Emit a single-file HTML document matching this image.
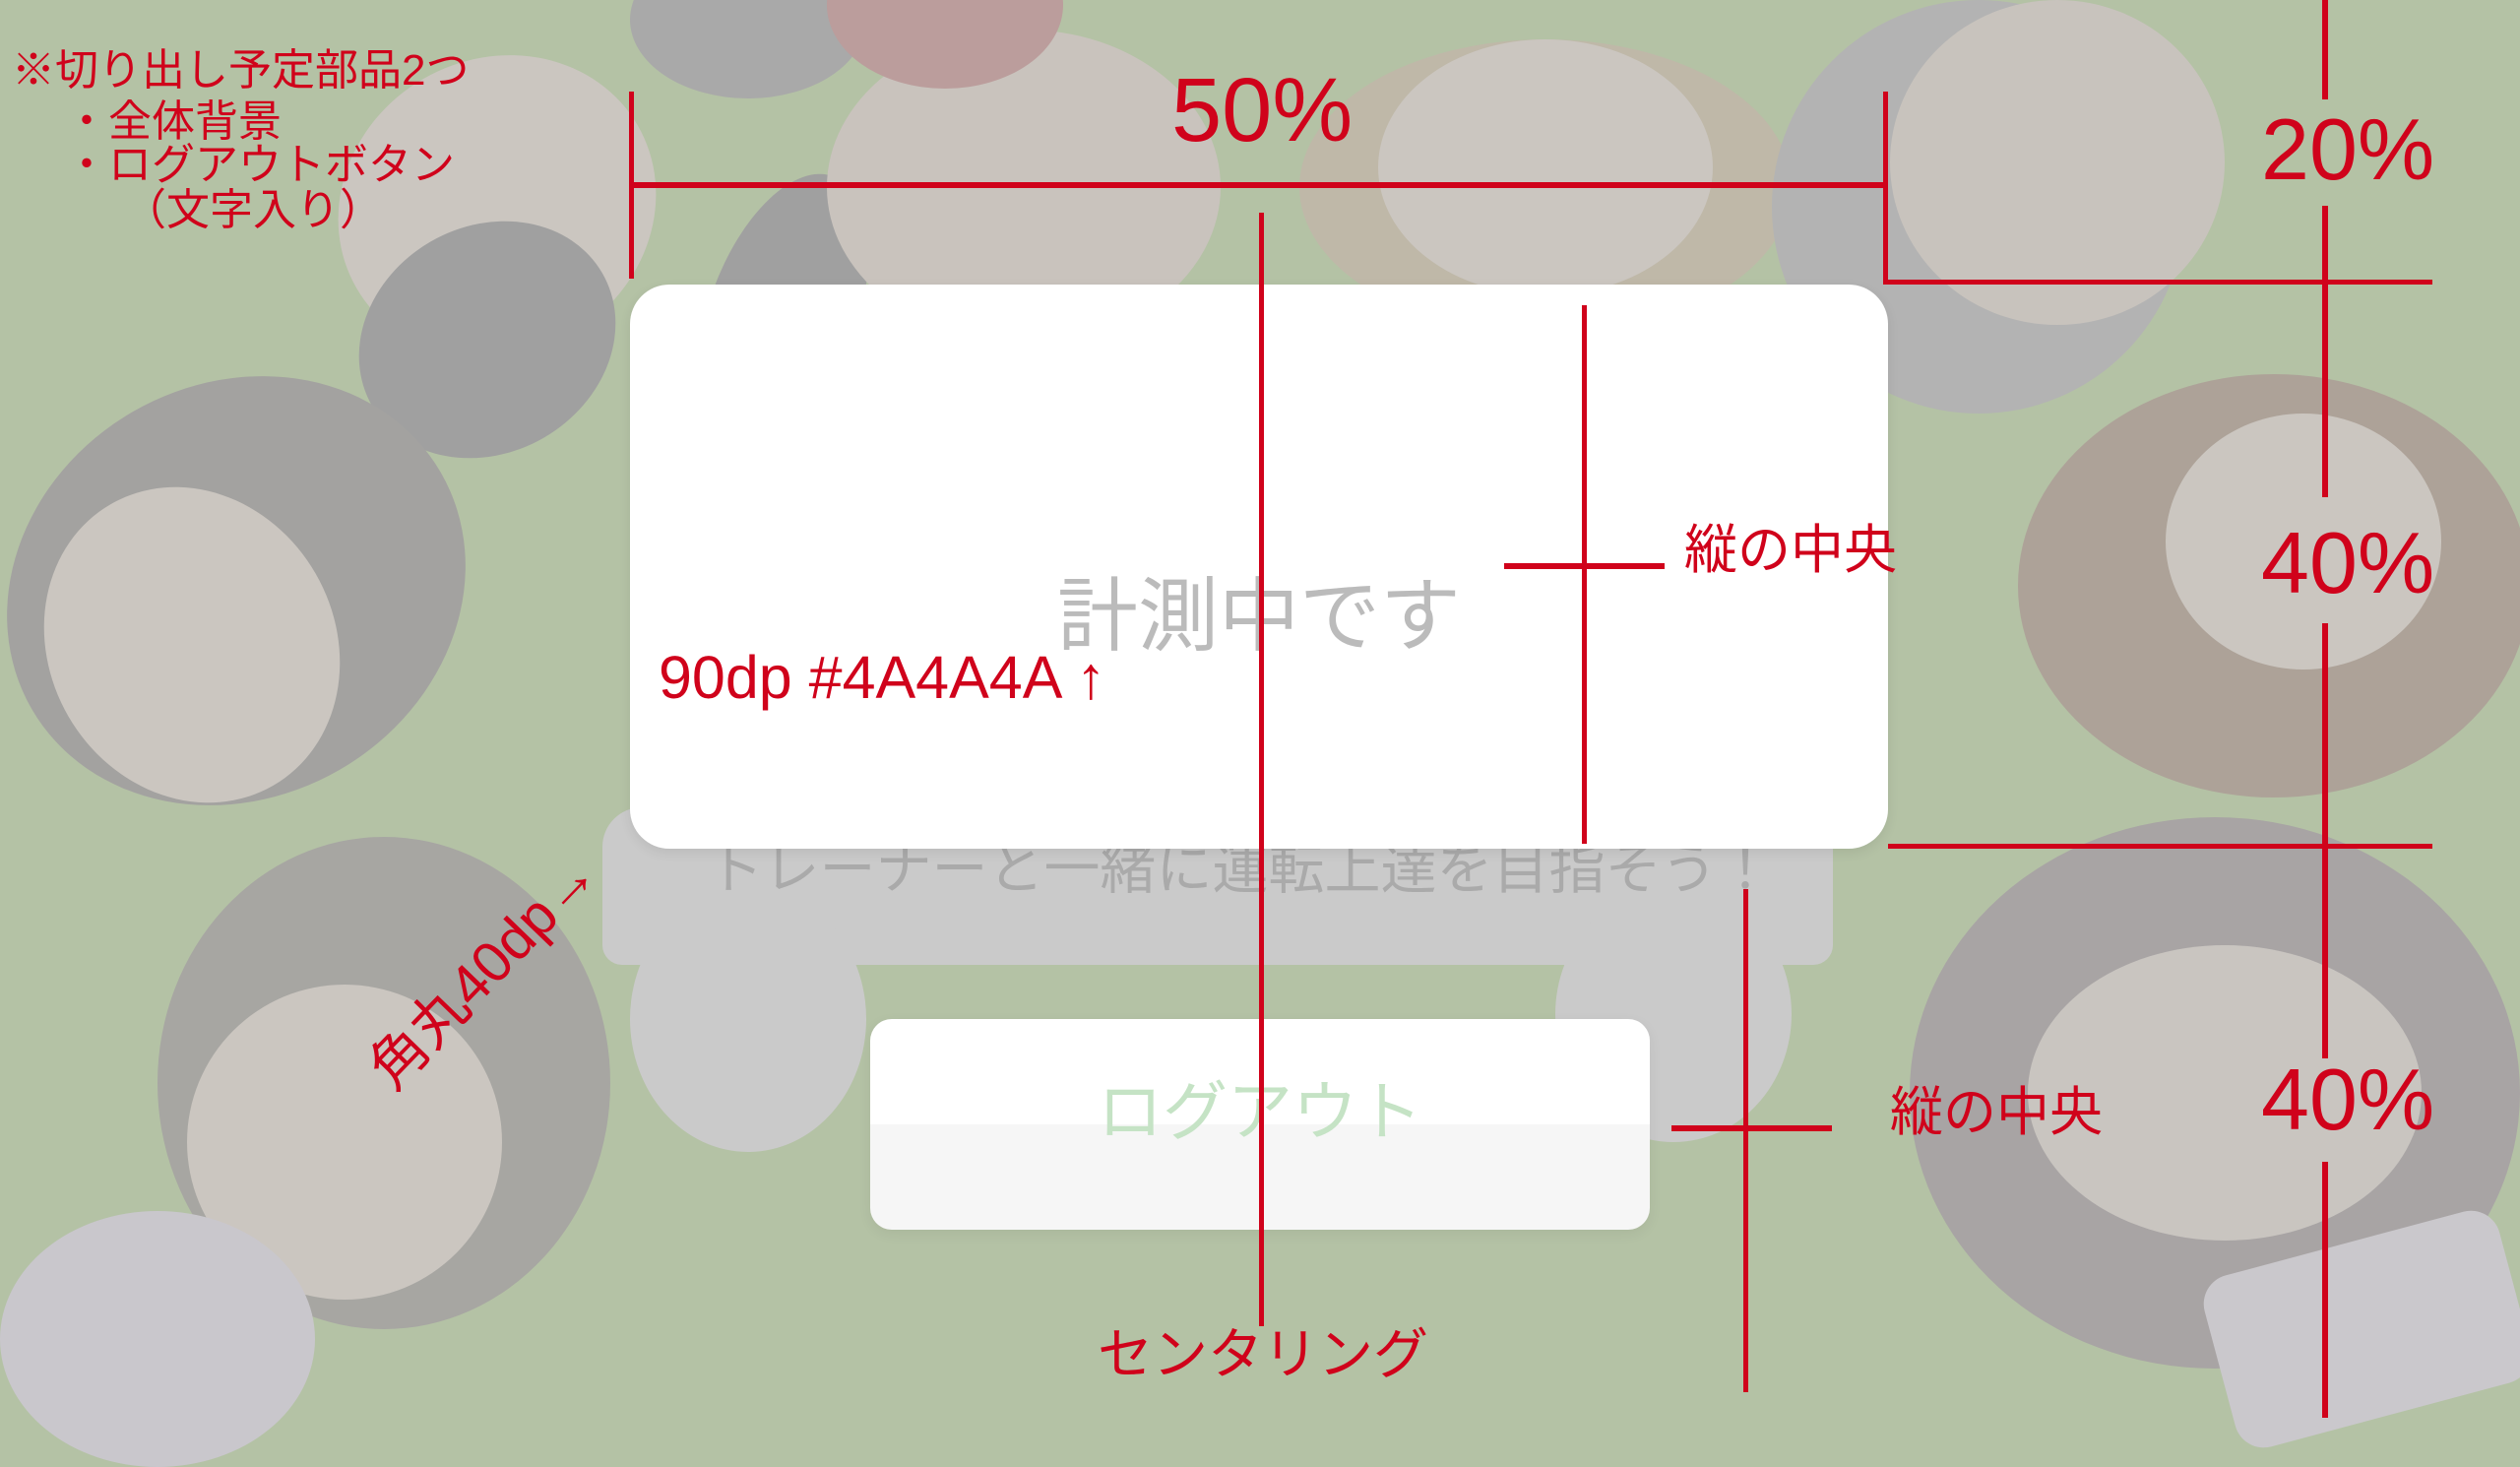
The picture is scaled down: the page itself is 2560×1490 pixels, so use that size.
<!DOCTYPE html>
<html><head><meta charset="utf-8"><style>
html,body{margin:0;padding:0}
body{width:2560px;height:1440px;position:relative;overflow:hidden;background:#b4c2a5;font-family:"Liberation Sans","Noto Sans CJK JP",sans-serif}
.a{position:absolute}
.r{position:absolute;background:#d0021b}
.t{position:absolute;color:#d0021b;white-space:nowrap;line-height:1}
.e{position:absolute;border-radius:50%}
</style></head><body>
<!-- background faces -->
<div class="e" style="left:640px;top:-60px;width:240px;height:160px;background:#a9a9a9"></div>
<div class="e" style="left:720px;top:170px;width:150px;height:300px;background:#a0a0a0;transform:rotate(20deg)"></div>
<div class="e" style="left:340px;top:60px;width:330px;height:300px;background:#cbc6c0;transform:rotate(-30deg)"></div>
<div class="e" style="left:360px;top:230px;width:270px;height:230px;background:#a0a0a0;transform:rotate(-30deg)"></div>
<div class="e" style="left:0px;top:390px;width:480px;height:420px;background:#a3a2a0;transform:rotate(-30deg)"></div>
<div class="e" style="left:50px;top:490px;width:290px;height:330px;background:#cbc6c0;transform:rotate(-30deg)"></div>
<div class="e" style="left:160px;top:850px;width:460px;height:500px;background:#a7a6a2"></div>
<div class="e" style="left:190px;top:1000px;width:320px;height:320px;background:#cbc6c0"></div>
<div class="e" style="left:0;top:1230px;width:320px;height:260px;background:#c9c7cc"></div>
<div class="e" style="left:840px;top:30px;width:400px;height:320px;background:#c9c3bd"></div>
<div class="e" style="left:840px;top:-80px;width:240px;height:170px;background:#bb9d9c"></div>
<div class="e" style="left:1320px;top:40px;width:500px;height:300px;background:#bfb8a8"></div>
<div class="e" style="left:1400px;top:40px;width:340px;height:260px;background:#cbc6c0"></div>
<div class="e" style="left:1800px;top:0px;width:420px;height:420px;background:#b3b3b3"></div>
<div class="e" style="left:1920px;top:0px;width:340px;height:330px;background:#c8c3bd"></div>
<div class="e" style="left:2050px;top:380px;width:520px;height:430px;background:#ada298"></div>
<div class="e" style="left:2200px;top:420px;width:280px;height:260px;background:#cbc6c0"></div>
<div class="e" style="left:1940px;top:830px;width:620px;height:560px;background:#a8a4a4"></div>
<div class="e" style="left:2060px;top:960px;width:400px;height:300px;background:#c9c5c0"></div>
<div class="a" style="left:2250px;top:1260px;width:310px;height:180px;background:#cac8cc;transform:rotate(-15deg);border-radius:30px"></div>
<!-- car shape -->
<div class="a" style="left:612px;top:820px;width:1250px;height:160px;background:#cacaca;border-radius:40px 40px 20px 20px"></div>
<div class="e" style="left:640px;top:900px;width:240px;height:270px;background:#cacaca"></div>
<div class="e" style="left:1580px;top:900px;width:240px;height:260px;background:#cacaca"></div>
<div class="a" style="left:600px;top:855px;width:1320px;text-align:center;font-size:57px;color:#aaa;line-height:1">トレーナーと一緒に運転上達を目指そう！</div>
<!-- card -->
<div class="a" style="left:640px;top:289px;width:1278px;height:573px;background:#fff;border-radius:40px;box-shadow:0 4px 12px rgba(0,0,0,.08)"></div>
<div class="a" style="left:640px;top:586px;width:1278px;text-align:center;font-size:82px;color:#bbb;line-height:1">計測中です</div>
<!-- logout button -->
<div class="a" style="left:884px;top:1035px;width:792px;height:214px;border-radius:22px;overflow:hidden;box-shadow:0 4px 14px rgba(0,0,0,.06)">
<div style="height:107px;background:#fff"></div><div style="height:107px;background:#f6f6f6"></div></div>
<div class="a" style="left:884px;top:1096px;width:792px;text-align:center;font-size:66px;color:#c5e3c5;line-height:1">ログアウト</div>
<!-- annotations -->
<div class="t" style="left:12px;top:50px;font-size:44px">※切り出し予定部品2つ</div>
<div class="t" style="left:66px;top:102px;font-size:44px">・全体背景</div>
<div class="t" style="left:66px;top:146px;font-size:44px">・ログアウトボタン</div>
<div class="t" style="left:125px;top:192px;font-size:44px">（文字入り）</div>

<div class="r" style="left:639px;top:93px;width:5px;height:190px"></div>
<div class="r" style="left:640px;top:185px;width:1278px;height:6px"></div>
<div class="t" style="left:1190px;top:66px;font-size:92px">50%</div>
<div class="r" style="left:1913px;top:93px;width:5px;height:193px"></div>
<div class="r" style="left:1913px;top:284px;width:558px;height:5px"></div>
<div class="r" style="left:1918px;top:857px;width:553px;height:5px"></div>
<div class="r" style="left:2359px;top:0;width:6px;height:101px"></div>
<div class="r" style="left:2359px;top:209px;width:6px;height:296px"></div>
<div class="r" style="left:2359px;top:633px;width:6px;height:442px"></div>
<div class="r" style="left:2359px;top:1180px;width:6px;height:260px"></div>
<div class="t" style="left:2297px;top:108px;font-size:88px">20%</div>
<div class="t" style="left:2297px;top:528px;font-size:88px">40%</div>
<div class="t" style="left:2297px;top:1073px;font-size:88px">40%</div>

<div class="r" style="left:1279px;top:216px;width:5px;height:1131px"></div>
<div class="t" style="left:1115px;top:1348px;font-size:56px">センタリング</div>

<div class="r" style="left:1607px;top:310px;width:5px;height:547px"></div>
<div class="r" style="left:1528px;top:572px;width:163px;height:6px"></div>
<div class="t" style="left:1711px;top:532px;font-size:54px">縦の中央</div>

<div class="r" style="left:1771px;top:903px;width:5px;height:511px"></div>
<div class="r" style="left:1698px;top:1143px;width:163px;height:6px"></div>
<div class="t" style="left:1920px;top:1103px;font-size:54px">縦の中央</div>

<div class="t" style="left:669px;top:658px;font-size:61px">90dp #4A4A4A ↑</div>
<div class="t" style="left:340px;top:958px;font-size:58px;transform:rotate(-46deg);transform-origin:center">角丸40dp→</div>
</body></html>
